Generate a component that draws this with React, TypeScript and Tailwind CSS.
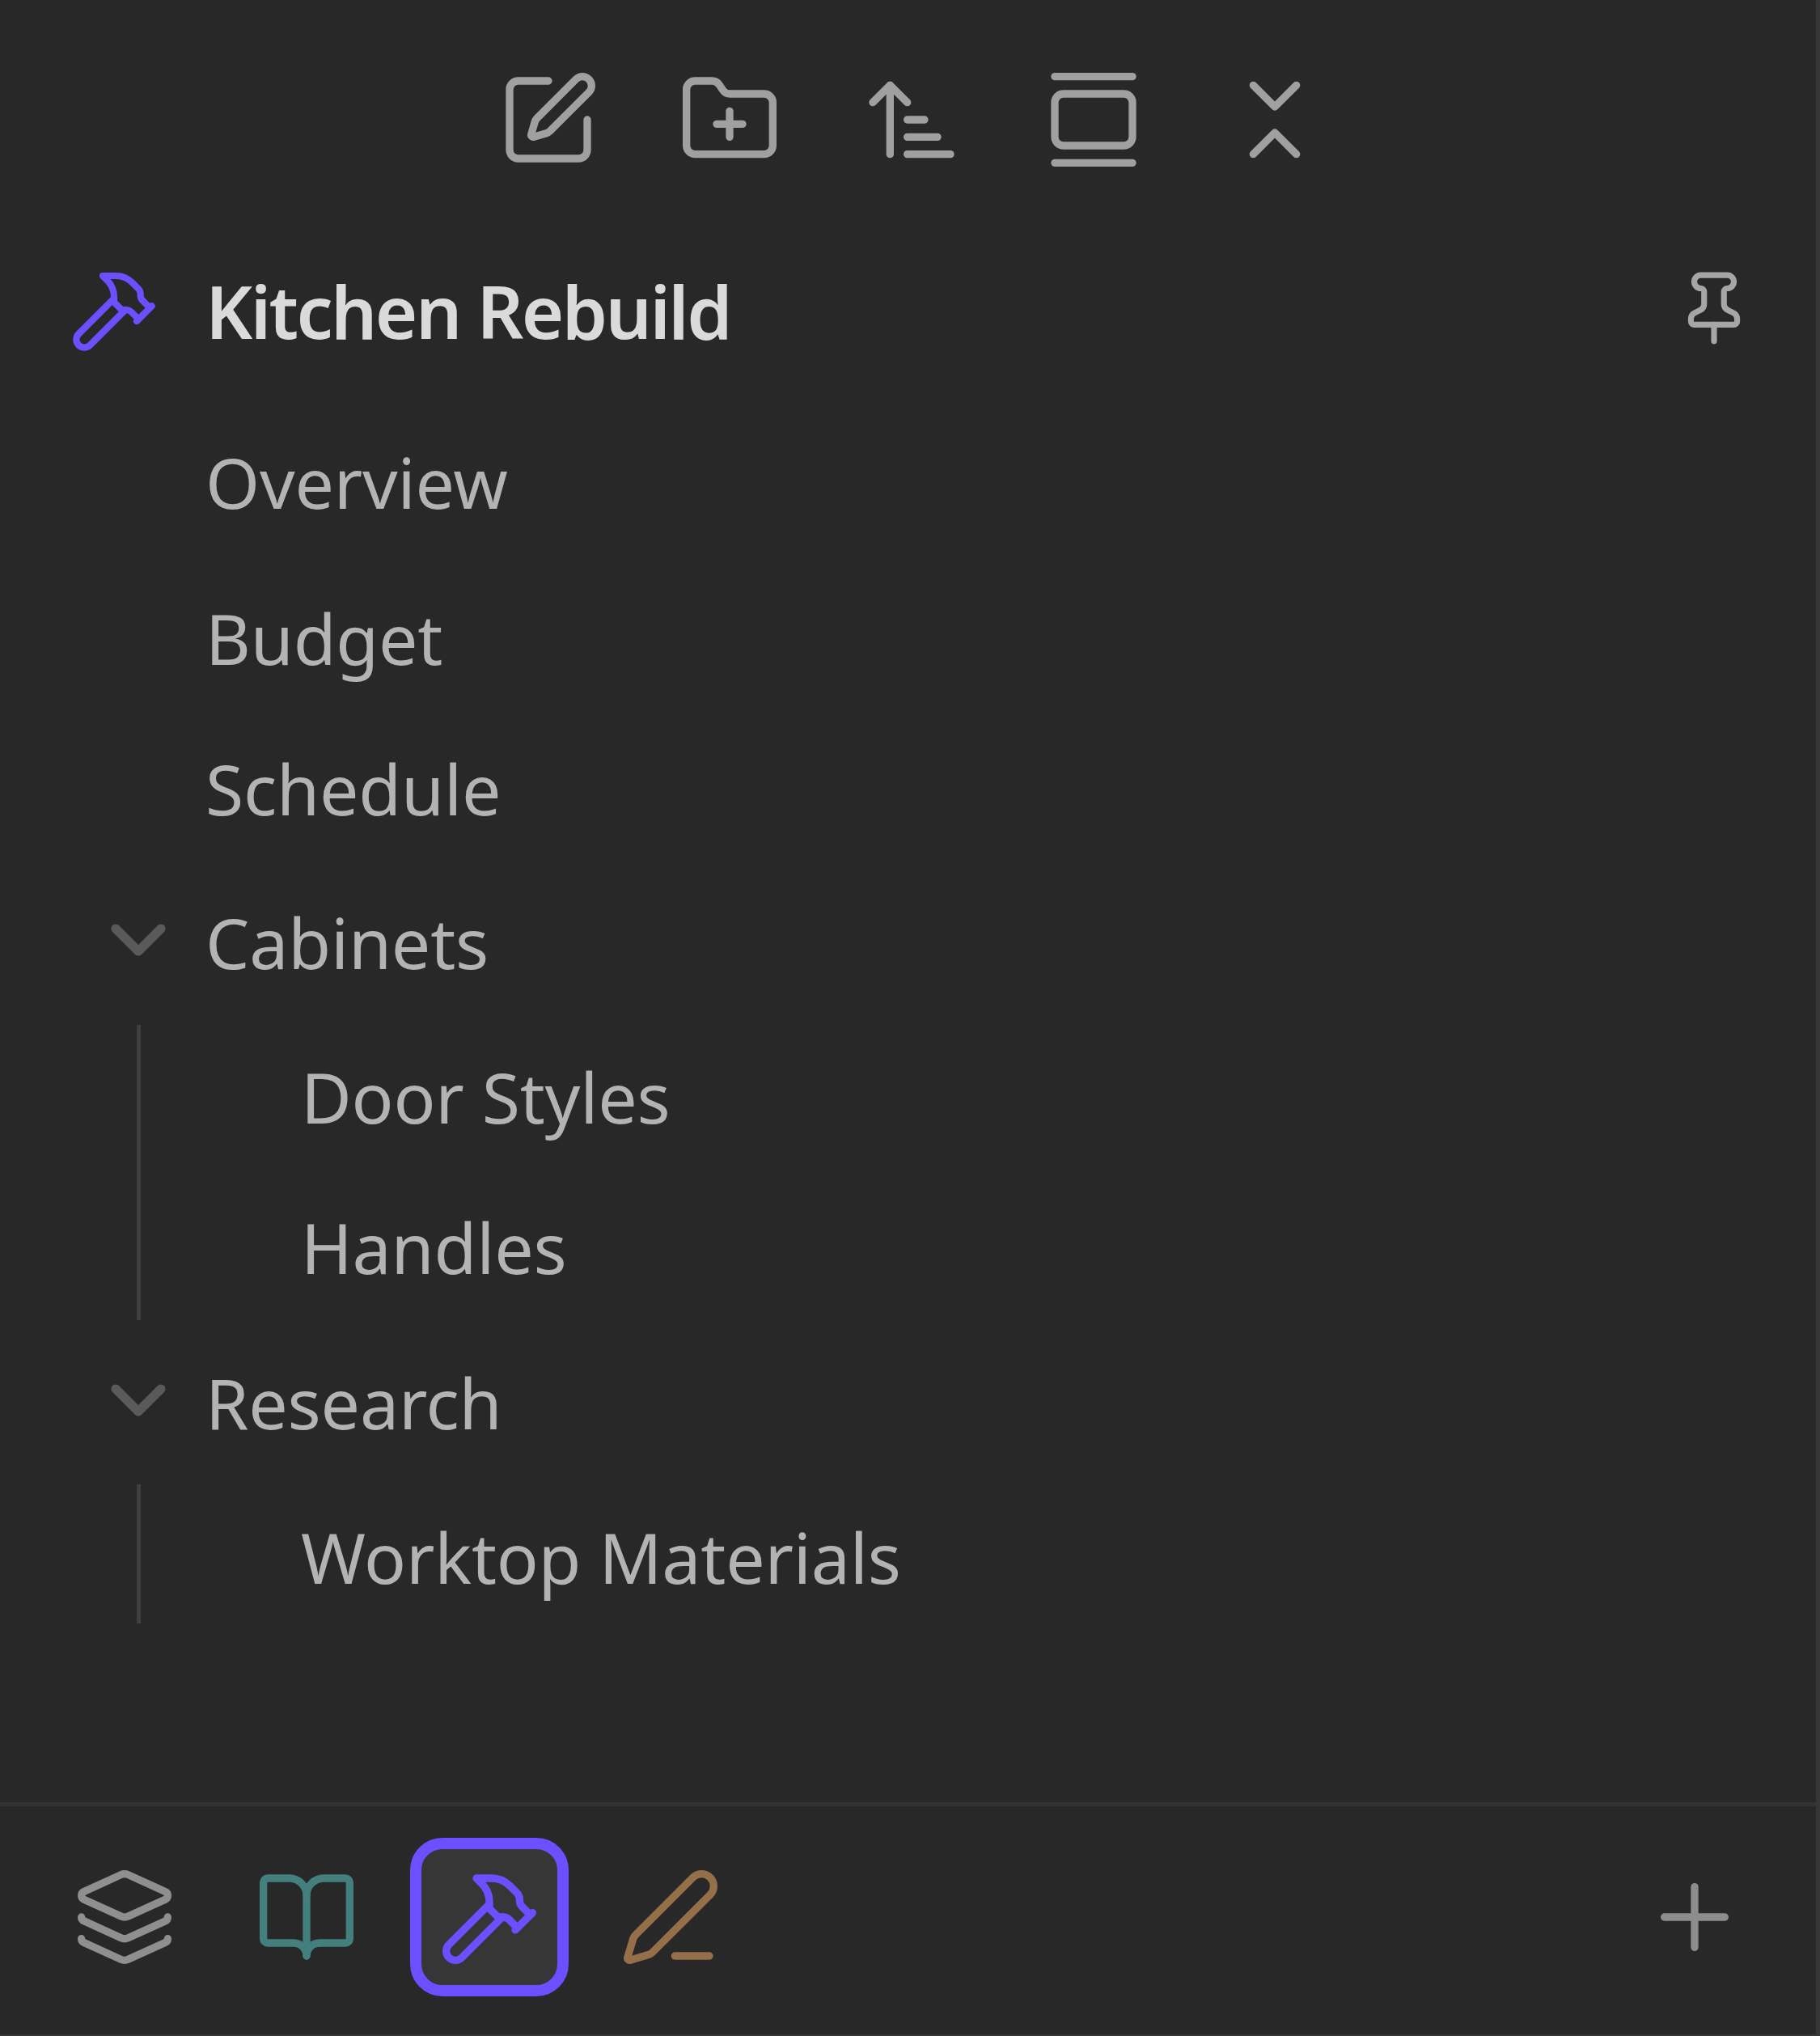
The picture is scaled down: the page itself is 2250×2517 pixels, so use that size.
import { SquarePen, FolderPlus, ArrowUpNarrowWide, GalleryVertical, ChevronsDownUp, Hammer, Pin, ChevronDown, Layers, BookOpen, PenLine, Plus } from "lucide-react";

const tools = [SquarePen, FolderPlus, ArrowUpNarrowWide, GalleryVertical, ChevronsDownUp];
const font = { fontFamily: '"Noto Sans", sans-serif' };

function Row({ label, h, indent = false, chevron = false }: { label: string; h: string; indent?: boolean; chevron?: boolean }) {
  return (
    <div className={`flex items-center ${h} ${indent ? "pl-[372px]" : "pl-[254px]"} relative`}>
      {chevron && (
        <span className="absolute left-[115px] top-[calc(50%-59px)] text-[#5a5a5a]">
          <ChevronDown size={112} strokeWidth={2.4} />
        </span>
      )}
      <span className="text-[86px] leading-none tracking-[-0.2px] text-[#b3b3b3] whitespace-nowrap">{label}</span>
    </div>
  );
}

export default function App() {
  return (
    <div style={font} className="flex h-[2517px] w-[2250px] flex-col border-r-[5px] border-b-[2px] border-[#363636] bg-[#282828]">
      <div className="flex gap-[96.7px] pl-[613.5px] pt-[84px] text-[#a0a0a0]">
        {tools.map((I, i) => (
          <I key={i} size={128} strokeWidth={1.75} />
        ))}
      </div>
      <div className="mt-[108px] flex h-[128px] items-center pl-[85px] pr-[77.5px]">
        <Hammer size={112} strokeWidth={1.75} className="mb-[3px] text-[#6c4fff]" />
        <span className="ml-[57px] text-[90px] font-semibold leading-none tracking-[-2.6px] text-[#dadada]">Kitchen Rebuild</span>
        <Pin size={98} strokeWidth={1.75} className="mb-[6px] ml-auto text-[#a6a6a6]" />
      </div>
      <div className="mt-[52px] flex flex-col">
        <Row label="Overview" h="h-[192px]" />
        <Row label="Budget" h="h-[194px]" />
        <Row label="Schedule" h="h-[177px]" />
        <Row label="Cabinets" h="h-[204px]" chevron />
        <div className="ml-[169px] flex h-[372px] flex-col">
          <div className="h-[365px] border-l-[5px] border-[#3f3f3f]">
            <div className="-ml-[174px]">
              <Row label="Door Styles" h="h-[178px]" indent />
              <Row label="Handles" h="h-[194px]" indent />
            </div>
          </div>
        </div>
        <Row label="Research" h="h-[190px]" chevron />
        <div className="ml-[169px] mt-[6px] flex flex-col">
          <div className="h-[172px] border-l-[5px] border-[#3f3f3f]">
            <div className="-ml-[174px]">
              <Row label="Worktop Materials" h="h-[180px]" indent />
            </div>
          </div>
        </div>
      </div>
      <div className="mt-auto h-[287px] border-t-[5px] border-[#333333]">
        <div className="flex items-center gap-[97px] pl-[89.5px] pt-[73px]">
          <Layers size={128} strokeWidth={1.75} className="text-[#8f8f8f]" />
          <BookOpen size={128} strokeWidth={1.75} className="text-[#43807d]" />
          <div className="-my-[34px] -ml-[32.5px] -mr-[35.5px] rounded-[40px] border-[14px] border-[#6c4fff] bg-[#363636] p-[20px]">
            <Hammer size={128} strokeWidth={1.75} className="text-[#6c4fff]" />
          </div>
          <PenLine size={128} strokeWidth={1.75} className="text-[#956e4a]" />
          <Plus size={128} strokeWidth={1.75} className="ml-auto mr-[86px] text-[#8d8d8d]" />
        </div>
      </div>
    </div>
  );
}
